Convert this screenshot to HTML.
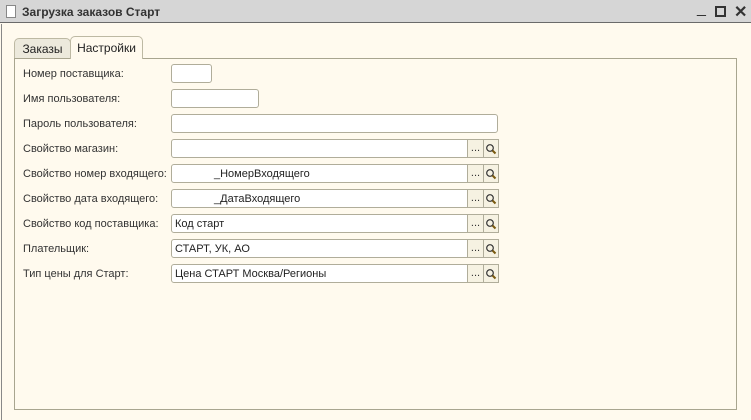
<!DOCTYPE html>
<html><head><meta charset="utf-8"><style>
*{margin:0;padding:0;box-sizing:border-box}
body{width:751px;height:420px;overflow:hidden;background:#fffaee;font-family:"Liberation Sans",Arial,sans-serif;font-size:11px;color:#222;position:relative}
.title{position:absolute;left:0;top:0;width:751px;height:23px;background:#d6d6d6;border-bottom:1px solid #6a6a6a}
.title .t{position:absolute;left:22px;top:5px;font-size:12px;font-weight:bold;color:#333}
.doc{position:absolute;left:6px;top:5px;width:10px;height:13px;background:#fff;border:1px solid #888}
.ctl{position:absolute;top:2px;font-size:16px;color:#333}
.leftline{position:absolute;left:1px;top:24px;width:1px;height:396px;background:#888}
.panel{position:absolute;left:14px;top:58px;width:723px;height:352px;border:1px solid #a8a58f}
.tab{position:absolute;height:22px;border:1px solid #bdb9a3;border-bottom:none;border-radius:5px 5px 0 0;font-size:12px;padding-top:4px;text-align:center}
.lab{position:absolute;left:23px;font-size:11px;color:#333}
.f{position:absolute;left:171px;height:19px;background:#fff;border:1px solid #b0ad9a;border-radius:3px;font-size:11px;padding:3px 0 0 3px}
.btn{position:absolute;top:-1px;width:17px;height:19px;border:1px solid #b0ad9a;background:#f6f2e2;font-size:11px;text-align:center;line-height:16px;color:#333}
</style></head><body>
<div class="title"><div class="doc"></div><div class="t">Загрузка заказов Старт</div>
<div class="ctl" style="left:697px;top:0">_</div>
<div style="position:absolute;left:715px;top:6px;width:11px;height:11px;border:2px solid #333"></div>
<div class="ctl" style="left:734px;top:2px;font-weight:bold">✕</div></div>
<div class="leftline"></div>
<div class="tab" style="left:14px;top:38px;width:57px;background:#ece9dc;height:20px;padding-top:3px">Заказы</div>
<div class="tab" style="left:70px;top:36px;width:73px;background:#fffaee;height:23px;z-index:2">Настройки</div>
<div class="panel"></div>

<div class="lab" style="top:68px">Номер поставщика:</div>
<div class="lab" style="top:93px">Имя пользователя:</div>
<div class="lab" style="top:118px">Пароль пользователя:</div>
<div class="lab" style="top:143px">Свойство магазин:</div>
<div class="lab" style="top:168px">Свойство номер входящего:</div>
<div class="lab" style="top:193px">Свойство дата входящего:</div>
<div class="lab" style="top:218px">Свойство код поставщика:</div>
<div class="lab" style="top:243px">Плательщик:</div>
<div class="lab" style="top:268px">Тип цены для Старт:</div>

<div class="f" style="top:64px;width:41px"></div>
<div class="f" style="top:89px;width:88px"></div>
<div class="f" style="top:114px;width:327px"></div>
<div class="f" style="top:139px;width:327px"><div class="btn" style="left:295px">...</div><div class="btn" style="left:311px;width:16px"><svg width="12" height="12" viewBox="0 0 12 12" style="margin-top:3px"><circle cx="5" cy="5" r="3.3" fill="none" stroke="#333" stroke-width="1.2"/><path d="M7.5 7.5L10.5 10.5" stroke="#7a5a10" stroke-width="2"/></svg></div></div>
<div class="f" style="top:164px;width:327px;padding-left:42px">_НомерВходящего<div class="btn" style="left:295px">...</div><div class="btn" style="left:311px;width:16px"><svg width="12" height="12" viewBox="0 0 12 12" style="margin-top:3px"><circle cx="5" cy="5" r="3.3" fill="none" stroke="#333" stroke-width="1.2"/><path d="M7.5 7.5L10.5 10.5" stroke="#7a5a10" stroke-width="2"/></svg></div></div>
<div class="f" style="top:189px;width:327px;padding-left:42px">_ДатаВходящего<div class="btn" style="left:295px">...</div><div class="btn" style="left:311px;width:16px"><svg width="12" height="12" viewBox="0 0 12 12" style="margin-top:3px"><circle cx="5" cy="5" r="3.3" fill="none" stroke="#333" stroke-width="1.2"/><path d="M7.5 7.5L10.5 10.5" stroke="#7a5a10" stroke-width="2"/></svg></div></div>
<div class="f" style="top:214px;width:327px">Код старт<div class="btn" style="left:295px">...</div><div class="btn" style="left:311px;width:16px"><svg width="12" height="12" viewBox="0 0 12 12" style="margin-top:3px"><circle cx="5" cy="5" r="3.3" fill="none" stroke="#333" stroke-width="1.2"/><path d="M7.5 7.5L10.5 10.5" stroke="#7a5a10" stroke-width="2"/></svg></div></div>
<div class="f" style="top:239px;width:327px">СТАРТ, УК, АО<div class="btn" style="left:295px">...</div><div class="btn" style="left:311px;width:16px"><svg width="12" height="12" viewBox="0 0 12 12" style="margin-top:3px"><circle cx="5" cy="5" r="3.3" fill="none" stroke="#333" stroke-width="1.2"/><path d="M7.5 7.5L10.5 10.5" stroke="#7a5a10" stroke-width="2"/></svg></div></div>
<div class="f" style="top:264px;width:327px">Цена СТАРТ Москва/Регионы<div class="btn" style="left:295px">...</div><div class="btn" style="left:311px;width:16px"><svg width="12" height="12" viewBox="0 0 12 12" style="margin-top:3px"><circle cx="5" cy="5" r="3.3" fill="none" stroke="#333" stroke-width="1.2"/><path d="M7.5 7.5L10.5 10.5" stroke="#7a5a10" stroke-width="2"/></svg></div></div>
</body></html>
